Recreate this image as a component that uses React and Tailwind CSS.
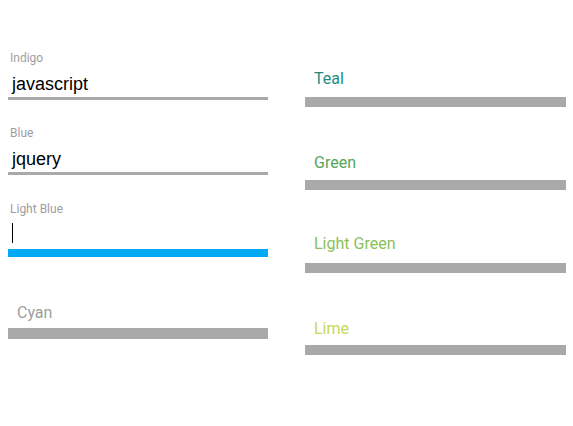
import React from 'react';

const roboto = { fontFamily: 'Roboto, "Noto Sans", sans-serif' };

const Field = ({ label, value, className = '', barClass, cursor }) => (
  <div className={className}>
    <div className="h-4 pl-[2px] text-[12px] leading-4 text-[#9e9e9e] font-[Roboto,sans-serif]">{label}</div>
    <div className="mt-[6px] h-[25px] pl-[4px] text-[18px] leading-6 text-black font-['Liberation_Sans',Arial,sans-serif]">
      {cursor ? <span className="mt-[3px] block h-5 w-px bg-black" /> : value}
    </div>
    <div className={barClass} />
  </div>
);

const Plain = ({ label, color, className = '', barClass }) => (
  <div className={className}>
    <div className={`h-6 pl-[9px] text-[16px] leading-6 font-[Roboto,sans-serif] ${color}`}>{label}</div>
    <div className={`h-[10px] bg-[#a9a9a9] ${barClass}`} />
  </div>
);

export default function App() {
  return (
    <div className="flex h-[426px] w-[573px] bg-white" style={roboto}>
      {/* Left column */}
      <div className="ml-[8px] w-[260px] pt-[50px]">
        <Field label="Indigo" value="javascript" barClass="h-[3px] bg-[#a9a9a9]" />
        <Field label="Blue" value="jquery" className="mt-[25px]" barClass="h-[3px] bg-[#a9a9a9]" />
        <Field label="Light Blue" cursor className="mt-[26px]" barClass="mt-px h-[8px] bg-[#03a9f4]" />
        <div className="mt-[44px]">
          <div className="h-6 pl-[9px] text-[16px] leading-6 text-[#9e9e9e] font-[Roboto,sans-serif]">Cyan</div>
          <div className="mt-[3px] h-[11px] bg-[#a9a9a9]" />
        </div>
      </div>

      {/* Right column */}
      <div className="ml-[37px] w-[261px] pt-[67px]">
        <Plain label="Teal" color="text-[#1f8a80]" barClass="mt-[6px]" />
        <Plain label="Green" color="text-[#55a558]" className="mt-[44px]" barClass="mt-[5px]" />
        <Plain label="Light Green" color="text-[#8cbf5a]" className="mt-[42px]" barClass="mt-[7px]" />
        <Plain label="Lime" color="text-[#c8d858]" className="mt-[44px]" barClass="mt-[4px]" />
      </div>
    </div>
  );
}
